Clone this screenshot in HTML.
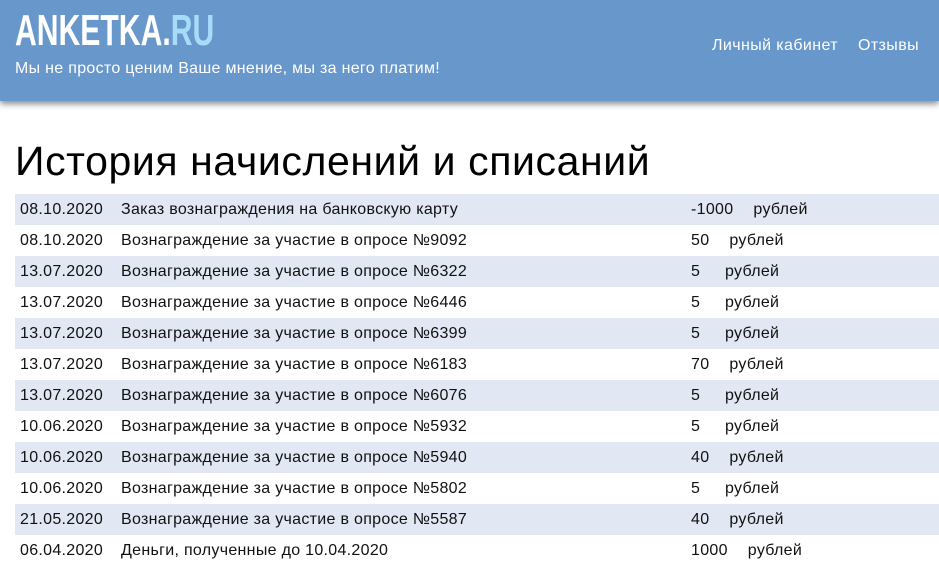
<!DOCTYPE html>
<html><head><meta charset="utf-8"><style>
body{margin:0;width:939px;height:571px;overflow:hidden;background:#fff;font-family:"Liberation Sans",sans-serif;}
.hd{position:absolute;left:0;top:0;width:939px;height:101px;background:#6897cb;box-shadow:0 3px 6px rgba(0,0,0,.45);}
.logo{position:absolute;left:15px;top:6px;font-size:44px;font-weight:bold;color:#fff;transform:scaleX(.685);transform-origin:left top;}
.logo span{color:#a7dcf8}
.tag{position:absolute;left:15px;top:60px;font-size:16px;color:#fff;letter-spacing:.3px;}
.nav{position:absolute;right:20px;top:37px;font-size:16px;color:#fff;letter-spacing:.4px;}
.nav span{margin-left:20px}
h1{position:absolute;left:15px;top:138px;margin:0;font-weight:normal;font-size:41px;letter-spacing:.6px;color:#000;}
table{position:absolute;left:15px;top:194px;width:924px;border-collapse:collapse;font-size:16px;letter-spacing:.3px;color:#111;}
td{height:31px;padding:0;vertical-align:middle;}
tr:nth-child(odd){background:#e1e8f3}
td.d{padding-left:5px;width:101px}
td.t{width:570px}
td.a span{display:inline-block;margin-right:20px}
</style></head><body>
<div class="hd"><div class="logo">ANKETKA.<span>RU</span></div>
<div class="tag">Мы не просто ценим Ваше мнение, мы за него платим!</div>
<div class="nav">Личный кабинет<span>Отзывы</span></div></div>
<h1>История начислений и списаний</h1>
<table>
<tr><td class="d">08.10.2020</td><td class="t">Заказ вознаграждения на банковскую карту</td><td class="a"><span>-1000</span>рублей</td></tr>
<tr><td class="d">08.10.2020</td><td class="t">Вознаграждение за участие в опросе №9092</td><td class="a"><span>50</span>рублей</td></tr>
<tr><td class="d">13.07.2020</td><td class="t">Вознаграждение за участие в опросе №6322</td><td class="a"><span>5</span>&nbsp;рублей</td></tr>
<tr><td class="d">13.07.2020</td><td class="t">Вознаграждение за участие в опросе №6446</td><td class="a"><span>5</span>&nbsp;рублей</td></tr>
<tr><td class="d">13.07.2020</td><td class="t">Вознаграждение за участие в опросе №6399</td><td class="a"><span>5</span>&nbsp;рублей</td></tr>
<tr><td class="d">13.07.2020</td><td class="t">Вознаграждение за участие в опросе №6183</td><td class="a"><span>70</span>рублей</td></tr>
<tr><td class="d">13.07.2020</td><td class="t">Вознаграждение за участие в опросе №6076</td><td class="a"><span>5</span>&nbsp;рублей</td></tr>
<tr><td class="d">10.06.2020</td><td class="t">Вознаграждение за участие в опросе №5932</td><td class="a"><span>5</span>&nbsp;рублей</td></tr>
<tr><td class="d">10.06.2020</td><td class="t">Вознаграждение за участие в опросе №5940</td><td class="a"><span>40</span>рублей</td></tr>
<tr><td class="d">10.06.2020</td><td class="t">Вознаграждение за участие в опросе №5802</td><td class="a"><span>5</span>&nbsp;рублей</td></tr>
<tr><td class="d">21.05.2020</td><td class="t">Вознаграждение за участие в опросе №5587</td><td class="a"><span>40</span>рублей</td></tr>
<tr><td class="d">06.04.2020</td><td class="t">Деньги, полученные до 10.04.2020</td><td class="a"><span>1000</span>рублей</td></tr>
</table>
</body></html>
